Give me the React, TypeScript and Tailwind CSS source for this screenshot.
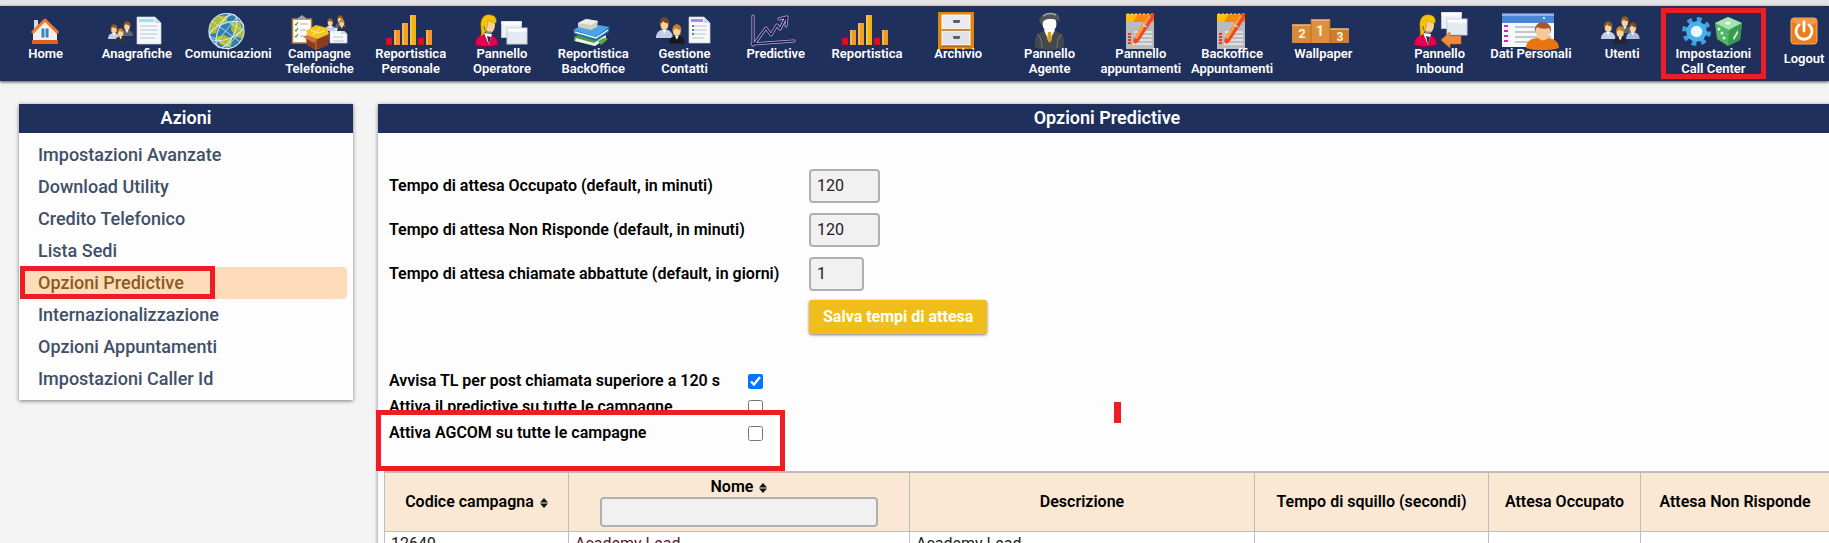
import React from 'react';

type IconProps = { children: React.ReactNode };

const Icon = ({ children }: IconProps) => (
  <svg viewBox="0 0 60 38" className="-mb-1 h-[38px] w-[60px] shrink-0 overflow-visible" aria-hidden="true">
    {children}
  </svg>
);

const Person = ({ x, y, s = 1, hair = '#8a5a22', coat = '#c3cde8' }: { x: number; y: number; s?: number; hair?: string; coat?: string }) => (
  <g transform={`translate(${x} ${y}) scale(${s})`}>
    <path d="M0 20c0-5 3-8 8-8s8 3 8 8z" fill={coat} />
    <path d="M6 12l2 4 2-4z" fill="#fff" />
    <path d="M3.500 7c-1-9 10-9 9 0l-1 4h-7z" fill={hair} />
    <ellipse cx="8" cy="7.500" rx="3.600" ry="4.800" fill="#f8d3a0" />
    <path d="M4 6c1-5 7-5 8 0-3 0-4-1-5-2-1 1-2 2-3 2z" fill={hair} />
  </g>
);

const Sheet = ({ x, y, w, h, head = '#a9dcea' }: { x: number; y: number; w: number; h: number; head?: string }) => (
  <g transform={`translate(${x} ${y})`}>
    <path d={`M0 0H${w - 6}L${w} 6V${h}H0z`} fill="#f4f8fb" stroke="#c9d0d6" strokeWidth=".7" />
    <path d={`M2 2H${w - 7}V5H2z`} fill={head} />
    <path d={`M${w - 6} 0V6H${w}z`} fill="#cfd8e2" />
    <path d={`M3 9H${w - 4}M3 13H${w - 3}${h > 20 ? `M3 17H${w - 4}M3 21H${w - 6}` : ''}`} stroke="#b9c2ca" strokeWidth="1.200" />
  </g>
);

const Operator = () => (
  <g>
    <path d="M3 33c0-7 4-10 9-11l9 2c4 2 5 5 5 9-7 2-17 2-23 0z" fill="#e5004f" stroke="#7d0030" strokeWidth=".6" />
    <path d="M12 21l5 12 3-11z" fill="#fff" />
    <path d="M15 24l2 9 2-8z" fill="#26304c" />
    <ellipse cx="17" cy="13" rx="6" ry="8.500" fill="#fbd09c" />
    <path d="M9 24c1-3 0-5 0-9C8 6 13 2 18 3c5 0 7 4 6 8-3 0-6-1-8-3 0 6-2 14-7 16z" fill="#f3c400" stroke="#b98b00" strokeWidth=".5" />
    <path d="M12 14c0 5 3 7 7 6" fill="none" stroke="#555" strokeWidth="1" />
  </g>
);

const Windows = ({ x, y }: { x: number; y: number }) => (
  <g transform={`translate(${x} ${y})`}>
    <rect x=".5" y=".5" width="20" height="16" fill="#edf1f6" stroke="#b8c2cd" />
    <rect x=".5" y=".5" width="20" height="3" fill="#fff" />
    <rect x="6" y="7" width="20" height="16" fill="#e4eaf1" stroke="#c2ccd8" />
    <rect x="6.500" y="7.500" width="19" height="3" fill="#fff" />
  </g>
);

const HomeIcon = () => (
  <Icon>
    <path d="M18 8h4v9h-4z" fill="#d9d9df" />
    <path d="M17 18L29 8l12 10v13H17z" fill="#eeeeec" />
    <path d="M16 28h26v4H16z" fill="#e0601f" />
    <path d="M16 21L29 8l13 13" fill="none" stroke="#f07a2a" strokeWidth="3" strokeLinejoin="round" />
    <path d="M25 16h8v10h-8z" fill="#3f83b5" stroke="#fff" strokeWidth=".8" />
    <path d="M29 16v10" stroke="#fff" strokeWidth="1" />
  </Icon>
);

const AnagraficheIcon = () => (
  <Icon>
    <Person x={1} y={12} s={0.75} />
    <Person x={14} y={9} s={0.75} coat="#5b6376" />
    <Person x={8} y={16} s={0.7} hair="#c0812c" coat="#30343d" />
    <Sheet x={30} y={5} w={24} h={27} />
  </Icon>
);

const GlobeIcon = () => (
  <Icon>
    <circle cx="28.500" cy="19" r="18" fill="#2f7fb2" />
    <path d="M14 10c5-7 12-7 16-5l-3 7-7 2-2 7-6 1c-1-5 0-9 2-12zM34 9l8 2c3 5 4 10 2 15l-6-1-5-7zM17 25l9-2 8 4-1 7c-6 2-12-1-16-9z" fill="#b5bd28" />
    <g fill="none" stroke="#cfe3ee" strokeWidth="1.200">
      <circle cx="28.500" cy="19" r="17.500" />
      <ellipse cx="28.500" cy="19" rx="8" ry="18" transform="rotate(25 28.500 19)" />
      <ellipse cx="28.500" cy="19" rx="18" ry="8" transform="rotate(-20 28.500 19)" />
      <path d="M14 9l28 21M17 32L39 5M11 22l20-20M27 37l18-20M20 4l24 14M12 24l22 12" strokeWidth=".8" />
    </g>
  </Icon>
);

const CampagneIcon = () => (
  <Icon>
    <rect x="3.500" y="7" width="19" height="24" fill="#fffdf5" stroke="#b27a45" strokeWidth="1.500" />
    <path d="M9 8V6l4-3 4 3v2z" fill="#9aa0a6" />
    <path d="M6 12l1 1 2-3M6 18l1 1 2-3M6 24l1 1 2-3" fill="none" stroke="#3fa336" strokeWidth="1.200" />
    <path d="M11 12h8M11 18h6M11 24h4" stroke="#a7b0b5" />
    <Sheet x={41} y={16} w={17} h={15} head="#edf1f5" />
    <Person x={36} y={6} s={0.65} />
    <Person x={46} y={3} s={0.65} coat="#5b6376" />
    <Person x={48} y={7} s={0.6} hair="#c0812c" coat="#30343d" />
    <path d="M17 24l10-4 13 3-1 10-12 5-9-5z" fill="#a8512b" />
    <path d="M17 24l10 4 13-5-1 10-12 5-9-5z" fill="#8d3d1f" />
    <path d="M27 28v10" stroke="#c97044" strokeWidth="1" />
    <path d="M17 19l10-6 11 3 2 6-12 5-9-3z" fill="#efc51e" />
    <path d="M22 18l6 3 8-2M24 23l7-7" stroke="#fff09a" fill="none" />
    <path d="M14 25l4-2 10 4-3 4z" fill="#cf7444" />
  </Icon>
);

const BarsIcon = () => (
  <Icon>
    <rect x="5" y="26" width="6" height="7" fill="#d4121c" />
    <rect x="13" y="18" width="6" height="15" fill="#f0962a" />
    <rect x="21" y="11" width="6" height="22" fill="#f0a02c" />
    <rect x="29" y="3" width="6" height="30" fill="#f0b418" />
    <rect x="37" y="26" width="6" height="7" fill="#d4121c" />
    <rect x="45" y="18" width="6" height="15" fill="#f0962a" />
    <path d="M14 18v15M22 11v22M30 3v30M46 18v15" stroke="#ffd372" strokeWidth="1" />
  </Icon>
);

const OperatoreIcon = () => (
  <Icon>
    <Operator />
    <Windows x={29} y={9} />
  </Icon>
);

const BooksIcon = () => (
  <Icon>
    <path d="M11 25l12-6 20 6-11 9-21-5z" fill="#4c9c42" />
    <path d="M13 26l18 5 12-8v4l-11 7-20-5z" fill="#eef2e8" />
    <path d="M10 18l13-7 24 4-14 10z" fill="#49a5e8" />
    <path d="M10 18l23 7 13-10v5l-13 9-22-7z" fill="#1b6fbd" />
    <path d="M12 20l21 6 12-8" fill="none" stroke="#e9f4fb" strokeWidth="1.500" />
    <path d="M15 11l8-4 12 2-1 6-6 3-13-3z" fill="#cfcfc6" />
    <path d="M15 11l8-4 12 2-7 4z" fill="#efefe8" />
    <path d="M35 29l6-3 4 1-7 6z" fill="#5aa93f" />
  </Icon>
);

const ContattiIcon = () => (
  <Icon>
    <Person x={2} y={5} s={1.05} hair="#77471c" />
    <Person x={15} y={12} s={0.98} hair="#c0812c" coat="#17181c" />
    <Sheet x={35} y={5} w={21} h={26} head="#a78be8" />
    <path d="M38 14h2M38 18h2M38 22h2" stroke="#555" strokeWidth="1.500" />
  </Icon>
);

const PredictiveIcon = () => (
  <Icon>
    <g fill="none" strokeLinecap="round" strokeLinejoin="round">
      <path d="M7 4v29M6 32l42-3M9 31l11-15 5 7 6-10 3 4 6-12M33 7l8-2-1 9" stroke="#b9b5dc" strokeWidth="3" />
      <path d="M7 4v29M6 32l42-3M9 31l11-15 5 7 6-10 3 4 6-12M33 7l8-2-1 9" stroke="#1c1350" strokeWidth="1.500" />
    </g>
    <circle cx="44" cy="24" r="1" fill="#1c1350" />
  </Icon>
);

const ArchivioIcon = () => (
  <Icon>
    <rect x="10" y="0" width="36" height="37" fill="#e0830f" />
    <rect x="14" y="3" width="28" height="14" fill="#e9ebee" stroke="#fff" />
    <rect x="14" y="19" width="28" height="14" fill="#e0e3e6" stroke="#fff" />
    <path d="M14 18h28M14 34h28" stroke="#9a5a10" />
    <path d="M25 8h7v2l-1 1h-5l-1-1zM25 24h7v2l-1 1h-5l-1-1z" fill="#5c6066" />
  </Icon>
);

const AgenteIcon = () => (
  <Icon>
    <path d="M15 35c-1-9 1-14 9-16h11c8 2 10 7 9 16-8 4-21 4-29 0z" fill="#44484c" />
    <path d="M17 22c3 2 5 7 5 14M42 22c-3 2-5 7-5 14" stroke="#777b80" fill="none" />
    <path d="M24 18l5 12 6-12z" fill="#fff" />
    <path d="M28 20h3l1 7-2 4-3-4z" fill="#d6a021" />
    <ellipse cx="29.500" cy="12" rx="7" ry="8" fill="#fff" />
    <path d="M19 9c2-7 9-10 16-8 5 2 5 5 4 9-2-3-5-3-10-3-4 0-7 3-8 6 0-2-1-3-2-4z" fill="#50555a" />
    <path d="M23 4c4-3 9-3 13-1" stroke="#a6abaf" strokeWidth="1.500" fill="none" />
  </Icon>
);

const AppuntamentiIcon = () => (
  <Icon>
    <rect x="15" y="2" width="28" height="35" fill="#b9bbbe" />
    <path d="M15 2h28v8H15z" fill="#f5890f" />
    <path d="M15 2h12l-5 8h-7z" fill="#ffc107" />
    <path d="M17 1v2M21 1v2M25 1v2M29 1v2M33 1v2M37 1v2M41 1v2" stroke="#c9cbd0" strokeWidth="1.200" />
    <path d="M23 20h18M23 24h18M23 28h18M23 32h18" stroke="#eceded" strokeWidth="1.500" />
    <path d="M17 22h3M17 25h3M17 28h3M17 31h3" stroke="#e23b1e" strokeWidth="1.800" />
    <path d="M38 3l5-2v5L28 29l-7 6 2-9z" fill="#f0452a" />
    <path d="M38 3l2 1-14 23-3-1z" fill="#ffa23c" />
    <path d="M32 13l4 2" stroke="#fff" />
    <path d="M21 35l1-5 3 2z" fill="#f6d7a5" />
  </Icon>
);

const WallpaperIcon = () => (
  <Icon>
    <rect x="-1" y="13" width="19" height="18" fill="#d98a38" />
    <rect x="18" y="8" width="19" height="23" fill="#de8f3c" />
    <rect x="37" y="17" width="19" height="14" fill="#cf7d2c" />
    <path d="M-1 13h19M18 8h19M37 17h19" stroke="#f3bd83" strokeWidth="1.500" />
    <path d="M18 8v23M37 8v23" stroke="#ad6720" strokeWidth=".8" />
    <g fill="#fff3df" fontFamily="Roboto, sans-serif" fontWeight="700" textAnchor="middle">
      <text x="9" y="26" fontSize="13">2</text>
      <text x="27" y="24" fontSize="14">1</text>
      <text x="47" y="29" fontSize="12">3</text>
    </g>
  </Icon>
);

const InboundIcon = () => (
  <Icon>
    <g transform="translate(1 0)">
      <Operator />
    </g>
    <Windows x={31} y={0} />
    <path d="M31 28l9-8v4h11v8H40v4z" fill="#f08a3c" stroke="#c96a22" strokeWidth=".6" />
  </Icon>
);

const DatiIcon = () => (
  <Icon>
    <rect x="1" y="1" width="52" height="34" fill="#f6f8fb" />
    <rect x="1" y="1" width="52" height="10" fill="#4a86d8" />
    <path d="M1 3h52" stroke="#8bb6ee" strokeWidth="2" />
    <circle cx="43" cy="6" r="1" fill="#fff" />
    <path d="M3 14h4M3 19h4M3 24h4M3 29h4" stroke="#d126c4" strokeWidth="2" />
    <path d="M14 15h36M14 20h36M14 25h36M14 30h36" stroke="#8d949c" strokeWidth="1" />
    <path d="M25 36c0-7 6-10 12-10h9c7 0 12 4 12 10-9 3-24 3-33 0z" fill="#e87511" />
    <ellipse cx="42" cy="20" rx="7" ry="8.500" fill="#fac79a" />
    <path d="M34 20c-2-13 18-13 16 0l-2-4c-4 1-8 1-12-1z" fill="#a4572a" />
  </Icon>
);

const UtentiIcon = () => (
  <Icon>
    <Person x={26} y={4} s={0.85} coat="#5b6376" />
    <Person x={9} y={9} s={0.9} />
    <Person x={34} y={10} s={0.85} hair="#77471c" coat="#aebadb" />
    <Person x={21} y={14} s={0.9} hair="#c0812c" coat="#22252c" />
  </Icon>
);

const ImpostazioniIcon = () => (
  <Icon>
    <circle cx="13.500" cy="19.500" r="12" fill="none" stroke="#3ba4e0" strokeWidth="5" strokeDasharray="4.700 4.720" />
    <circle cx="13.500" cy="19.500" r="8" fill="#e9f7fe" stroke="#48b0ea" strokeWidth="4.500" />
    <path d="M45 5l14 6-2 17-12 6-11-7-2-16z" fill="#4fb665" />
    <path d="M45 5l14 6-13 7-14-7z" fill="#a5e2ae" />
    <path d="M46 18l13-7-2 17-12 6z" fill="#379a50" />
    <g fill="#e8f9ea">
      <ellipse cx="45" cy="11" rx="3" ry="1.500" />
      <circle cx="36" cy="17" r="1.500" />
      <circle cx="41" cy="26" r="1.500" />
      <circle cx="39" cy="21" r="1.500" />
      <path d="M50 26l5-8v3l-4 7z" />
    </g>
  </Icon>
);

const LogoutIcon = () => (
  <Icon>
    <rect x="17" y="6" width="26" height="26" rx="3" fill="#ec7d1c" stroke="#f8ad63" />
    <path d="M18 9c8 6 16 6 24 2V8l-2-2H20z" fill="#f59a45" />
    <path d="M25 13a8 8 0 1 0 10 0M30 10v9" fill="none" stroke="#fff" strokeWidth="2.800" strokeLinecap="round" />
  </Icon>
);

const mainNav = [
  { lines: ['Home'], icon: <HomeIcon /> },
  { lines: ['Anagrafiche'], icon: <AnagraficheIcon /> },
  { lines: ['Comunicazioni'], icon: <GlobeIcon /> },
  { lines: ['Campagne', 'Telefoniche'], icon: <CampagneIcon /> },
  { lines: ['Reportistica', 'Personale'], icon: <BarsIcon /> },
  { lines: ['Pannello', 'Operatore'], icon: <OperatoreIcon /> },
  { lines: ['Reportistica', 'BackOffice'], icon: <BooksIcon /> },
  { lines: ['Gestione', 'Contatti'], icon: <ContattiIcon /> },
  { lines: ['Predictive'], icon: <PredictiveIcon /> },
  { lines: ['Reportistica'], icon: <BarsIcon /> },
  { lines: ['Archivio'], icon: <ArchivioIcon /> },
  { lines: ['Pannello', 'Agente'], icon: <AgenteIcon /> },
  { lines: ['Pannello', 'appuntamenti'], icon: <AppuntamentiIcon /> },
  { lines: ['Backoffice', 'Appuntamenti'], icon: <AppuntamentiIcon /> },
  { lines: ['Wallpaper'], icon: <WallpaperIcon /> },
];

const userNav = [
  { lines: ['Pannello', 'Inbound'], icon: <InboundIcon /> },
  { lines: ['Dati Personali'], icon: <DatiIcon /> },
  { lines: ['Utenti'], icon: <UtentiIcon /> },
  { lines: ['Impostazioni', 'Call Center'], icon: <ImpostazioniIcon />, marked: true },
];

const actions = [
  'Impostazioni Avanzate',
  'Download Utility',
  'Credito Telefonico',
  'Lista Sedi',
  'Opzioni Predictive',
  'Internazionalizzazione',
  'Opzioni Appuntamenti',
  'Impostazioni Caller Id',
];

const waits = [
  { id: 'occupato', label: 'Tempo di attesa Occupato (default, in minuti)', value: '120', width: 'w-[71px]' },
  { id: 'non-risponde', label: 'Tempo di attesa Non Risponde (default, in minuti)', value: '120', width: 'w-[71px]' },
  { id: 'abbattute', label: 'Tempo di attesa chiamate abbattute (default, in giorni)', value: '1', width: 'w-[55px]' },
];

const flags = [
  { id: 'avvisa', label: 'Avvisa TL per post chiamata superiore a 120 s', checked: true },
  { id: 'predictive', label: 'Attiva il predictive su tutte le campagne', checked: false },
  { id: 'agcom', label: 'Attiva AGCOM su tutte le campagne', checked: false, marked: true },
];

type NavItemProps = { lines: string[]; icon: React.ReactNode; marked?: boolean };

const NavItem = ({ lines, icon, marked }: NavItemProps) => (
  <li className="relative min-w-0 flex-1">
    <a href="#" className="flex flex-col items-center">
      {icon}
      <span className="relative text-center whitespace-nowrap">
        {lines.map((line) => (
          <span key={line} className="block">{line}</span>
        ))}
      </span>
    </a>
    {marked && <span className="absolute -inset-x-[7px] -top-1 h-[71px] border-5 border-[#ee1c24] pointer-events-none" />}
  </li>
);

const SortArrows = () => (
  <svg viewBox="0 0 8 10" className="ml-1.5 inline-block h-2.5 w-2" aria-hidden="true">
    <path d="M4 0l4 4.500H0zM4 10L0 5.500h8z" fill="#111" />
  </svg>
);

const App = () => {
  return (
    <div className="min-h-screen overflow-x-clip bg-[#f4f4f4] font-[Roboto,sans-serif] text-base text-black">
      <header className="border-t-6 border-[#e4e4e4]">
        <nav className="h-[75px] bg-[#20305c] pt-1.5 text-[13px] leading-[15px] font-semibold text-white shadow-[0_1px_3px_rgba(0,0,0,0.7)]">
          <ul className="flex">
            {mainNav.map((item, i) => (
              <NavItem key={i} {...item} />
            ))}
            <li className="w-[25px] shrink-0" aria-hidden="true" />
            {userNav.map((item, i) => (
              <NavItem key={i} {...item} />
            ))}
            <li className="ml-5 w-[50px] shrink-0">
              <a href="#" className="flex flex-col items-center gap-[5px]">
                <LogoutIcon />
                <span>Logout</span>
              </a>
            </li>
          </ul>
        </nav>
      </header>

      <div className="flex items-start gap-[25px] pt-[23px] pl-[19px]">
        <aside className="w-[334px] shrink-0 bg-[#fdfdfd] shadow-[0_1px_4px_rgba(0,0,0,0.5)]">
          <h2 className="h-[29px] bg-[#20305c] text-center text-[18px] leading-7 font-semibold text-white">Azioni</h2>
          <ul className="pt-1.5 pr-1.5 pb-[5px] pl-[3px]">
            {actions.map((action) => (
              <li key={action} className="relative">
                <a
                  href="#"
                  className={
                    action === 'Opzioni Predictive'
                      ? 'block rounded bg-[#ffdcb9] pl-4 text-[18px] leading-8 font-medium text-[#8a5a22]'
                      : 'block rounded pl-4 text-[18px] leading-8 font-medium text-[#405068]'
                  }
                >
                  {action}
                </a>
                {action === 'Opzioni Predictive' && (
                  <span className="absolute -top-px -left-0.5 h-[33px] w-[195px] border-5 border-[#ee1c24] pointer-events-none" />
                )}
              </li>
            ))}
          </ul>
        </aside>

        <main className="relative -mr-[7px] min-w-0 flex-1 bg-[#fdfdfd] shadow-[0_1px_4px_rgba(0,0,0,0.5)]">
          <h1 className="h-[29px] bg-[#20305c] text-center text-[18px] leading-7 font-semibold text-white">Opzioni Predictive</h1>

          <form className="px-[11px] pt-9">
            <div className="flex flex-col gap-2.5">
              {waits.map((wait) => (
                <div key={wait.id} className="flex items-center">
                  <label htmlFor={wait.id} className="w-[420px] font-semibold">{wait.label}</label>
                  <input
                    id={wait.id}
                    type="text"
                    defaultValue={wait.value}
                    className={`${wait.width} h-[34px] rounded border-2 border-[#b0b0b0] bg-[#f1f1f1] px-1.5 pb-0.5 text-[#222]`}
                  />
                </div>
              ))}
            </div>
            <button
              type="button"
              className="mt-[9px] ml-[420px] h-[34px] rounded-[3px] bg-[#efbe1d] px-3.5 font-bold text-white shadow-[0_1px_3px_rgba(0,0,0,0.5)]"
            >
              Salva tempi di attesa
            </button>

            <div className="mt-[34px]">
              {flags.map((flag) => (
                <div key={flag.id} className="relative flex h-[26px] items-center">
                  <label htmlFor={flag.id} className="w-[359px] font-semibold">{flag.label}</label>
                  <input id={flag.id} type="checkbox" defaultChecked={flag.checked} className="size-[15px]" />
                  {flag.marked && (
                    <span className="absolute -top-2.5 -left-[13px] h-[61px] w-[409px] border-5 border-[#ee1c24] pointer-events-none" />
                  )}
                </div>
              ))}
            </div>
          </form>

          {/* cursor mark */}
          <span className="absolute top-[298px] left-[736px] h-[21px] w-[7px] bg-[#ee1c24]" />

          <div className="px-1.5 pt-[25px]">
            <table className="w-full table-fixed border-collapse border-t-2 border-[#bdbdbd] bg-white [&_td]:border [&_td]:border-[#bdbdbd] [&_td]:px-1.5 [&_th]:border-x [&_th]:border-[#bdbdbd] [&_th]:font-semibold">
              <colgroup>
                <col className="w-[184px]" />
                <col className="w-[341px]" />
                <col />
                <col className="w-[234px]" />
                <col className="w-[152px]" />
                <col className="w-[189px]" />
              </colgroup>
              <thead>
                <tr className="h-[59px] bg-[#fae8d4]">
                  <th>Codice campagna<SortArrows /></th>
                  <th>
                    <label htmlFor="filtro-nome" className="block leading-5">Nome<SortArrows /></label>
                    <input id="filtro-nome" type="text" className="h-[30px] w-[278px] rounded border-2 border-[#b0b0b0] bg-[#f1f1f1] px-2" />
                  </th>
                  <th>Descrizione</th>
                  <th>Tempo di squillo (secondi)</th>
                  <th>Attesa Occupato</th>
                  <th>Attesa Non Risponde</th>
                </tr>
              </thead>
              <tbody>
                <tr className="text-[#222]">
                  <td>12649</td>
                  <td><a href="#" className="text-[#5c1a33]">Academy Lead</a></td>
                  <td>Academy Lead</td>
                  <td />
                  <td />
                  <td />
                </tr>
              </tbody>
            </table>
          </div>
        </main>
      </div>
    </div>
  );
};

export default App;
